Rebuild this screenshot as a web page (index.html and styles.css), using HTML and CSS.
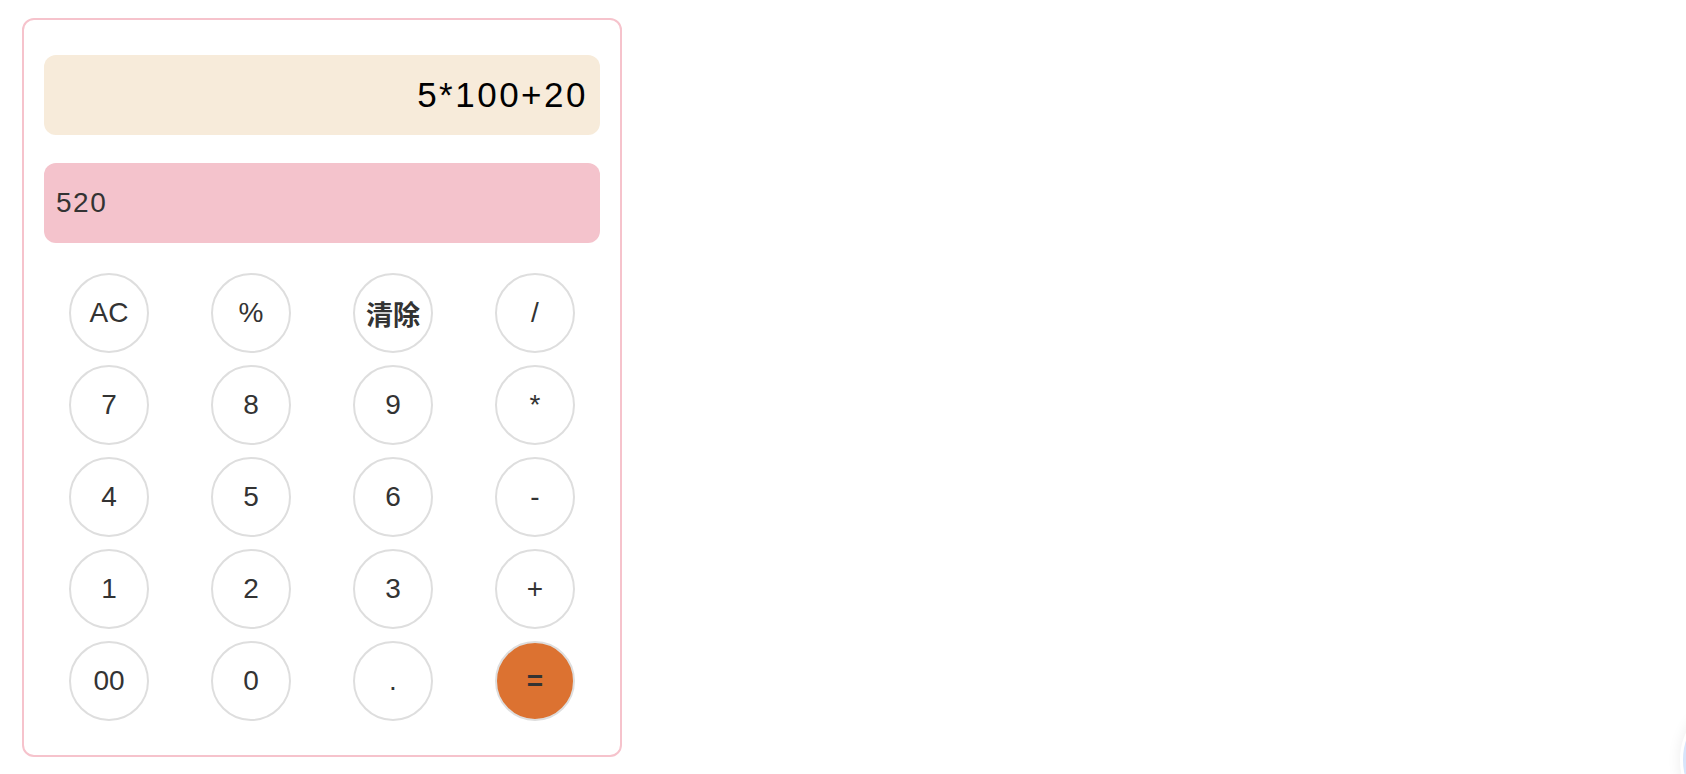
FILE: index.html
```html
<!DOCTYPE html>
<html lang="zh">
<head>
<meta charset="utf-8">
<title>计算器</title>
<link rel="stylesheet" href="styles.css">
</head>
<body>
<div class="calc">
  <div class="expr">5*100+20</div>
  <div class="result">520</div>
  <div class="keys">
    <button class="key">AC</button>
    <button class="key">%</button>
    <button class="key cjk">清除</button>
    <button class="key">/</button>
    <button class="key">7</button>
    <button class="key">8</button>
    <button class="key">9</button>
    <button class="key">*</button>
    <button class="key">4</button>
    <button class="key">5</button>
    <button class="key">6</button>
    <button class="key">-</button>
    <button class="key">1</button>
    <button class="key">2</button>
    <button class="key">3</button>
    <button class="key">+</button>
    <button class="key">00</button>
    <button class="key">0</button>
    <button class="key">.</button>
    <button class="key equal">=</button>
  </div>
</div>
<div class="float-btn"></div>
</body>
</html>
```
FILE: styles.css
```css
html, body {
  margin: 0;
  padding: 0;
  background: #fff;
  overflow: hidden;
}
body {
  padding: 18px 0 0 22px;
  font-family: "Liberation Sans", Arial, "Noto Sans CJK SC", sans-serif;
}
.calc {
  box-sizing: border-box;
  width: 600px;
  border: 2px solid #f6c3cc;
  border-radius: 12px;
  padding: 35px 20px 34px;
  display: flex;
  flex-direction: column;
}
.expr {
  height: 80px;
  background: #f7ebda;
  border-radius: 12px;
  display: flex;
  align-items: center;
  justify-content: flex-end;
  padding: 0 12px 0 12px;
  font-size: 35px;
  letter-spacing: 2.5px;
  color: #000;
  margin-bottom: 28px;
}
.result {
  height: 80px;
  background: #f4c3cc;
  border-radius: 12px;
  display: flex;
  align-items: center;
  padding: 0 12px;
  font-size: 28px;
  letter-spacing: 1.5px;
  color: #333;
  margin-bottom: 30px;
}
.keys {
  display: grid;
  grid-template-columns: repeat(4, 1fr);
  grid-auto-rows: 80px;
  row-gap: 12px;
  justify-items: center;
  margin: 0 -6px;
}
.key {
  box-sizing: border-box;
  width: 80px;
  height: 80px;
  border-radius: 50%;
  border: 2px solid #dedede;
  background: #fff;
  color: #333;
  font-family: "Liberation Sans", Arial, "Noto Sans CJK SC", sans-serif;
  font-size: 28px;
  padding: 0;
  display: flex;
  align-items: center;
  justify-content: center;
}
.key.cjk {
  font-family: "Noto Sans CJK SC", sans-serif;
  font-weight: 700;
  font-size: 27px;
}
.key.equal {
  background: #dc7231;
  font-weight: 700;
}
.float-btn {
  position: fixed;
  left: 1680px;
  top: 696px;
  width: 128px;
  height: 128px;
  box-sizing: border-box;
  border-radius: 50%;
  background: #d7e5fb;
  border: 3px solid #fff;
  box-shadow: 0 0 14px rgba(0,0,0,0.08);
}
```
